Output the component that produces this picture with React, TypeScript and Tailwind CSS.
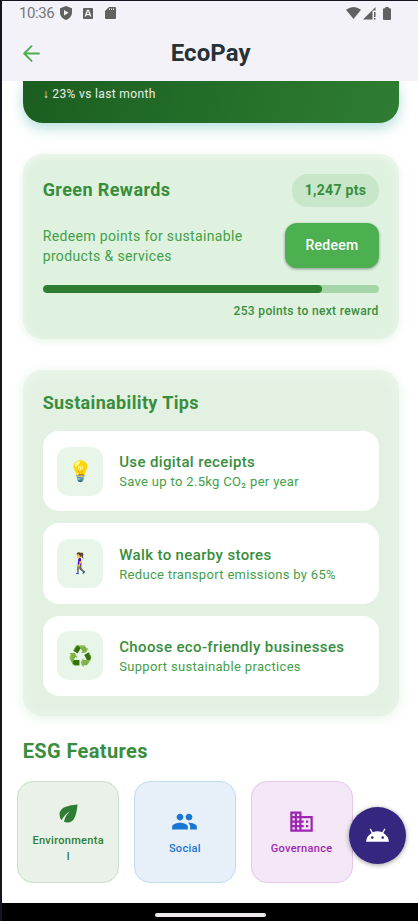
import React from "react";
import { MdAndroid, MdBusiness, MdEco, MdPeople } from "react-icons/md";

function StatusBar() {
  return (
    <div className="flex h-6 items-center justify-between pl-[17px] pr-[27px] text-[#616161]">
      <div className="flex items-center">
        <span className="w-[41px] text-[15px] leading-6 tracking-[-0.400px] text-[#757575]">10:36</span>
        <svg className="h-[14px] w-3" viewBox="0 0 12 14" fill="currentColor">
          <path fillRule="evenodd" d="M6 0 12 2.2V6.6C12 10 9.500 13 6 14 2.500 13 0 10 0 6.600V2.200ZM4 4V9.500L8.600 6.750Z" />
        </svg>
        <svg className="ml-[11px] h-[11px] w-[10px]" viewBox="0 0 10 11" fill="none">
          <rect width="10" height="11" rx="1" fill="currentColor" />
          <path d="M2.300 8.500 4.400 2.500H5.600L7.700 8.500M3.200 6.500H6.800" stroke="#f3f2f8" strokeWidth="1.300" />
        </svg>
        <svg className="ml-3 h-3 w-[11px]" viewBox="0 0 11 12" fill="currentColor">
          <path fillRule="evenodd" d="M4 0H10Q11 0 11 1V11Q11 12 10 12H1Q0 12 0 11V4ZM4 1.500V3H5V1.500ZM6 1.500V3H7V1.500ZM8 1.500V3H9V1.500Z" />
        </svg>
      </div>
      <div className="flex items-center">
        <svg className="h-3 w-[15px]" viewBox="0 0 15 12" fill="currentColor">
          <path d="M0 2.700Q7.500-2.700 15 2.700L7.500 12Z" />
        </svg>
        <svg className="ml-[1.500px] h-[13px] w-[13px]" viewBox="0 0 13 13" fill="currentColor">
          <path d="M0 12.500 12.500 0V3.500H9.500V12.500Z" />
          <path d="M11 5H12.500V10H11ZM11 11H12.500V12.500H11Z" />
        </svg>
        <svg className="ml-[7px] mr-[0.500px] h-[13px] w-2" viewBox="0 0 8 13" fill="currentColor">
          <path d="M2.300 0H5.700V1.300H7Q8 1.300 8 2.300V12Q8 13 7 13H1Q0 13 0 12V2.300Q0 1.300 1 1.300H2.300Z" />
        </svg>
      </div>
    </div>
  );
}

function Header() {
  return (
    <div className="grid h-14 grid-cols-[1fr_auto_1fr] items-center pl-[20.500px] pr-[19px]">
      <svg className="h-[17px] w-[17px]" viewBox="0 0 17 17" fill="none" stroke="#4caf50" strokeWidth="1.900" strokeLinecap="round" strokeLinejoin="round">
        <path d="M16 8.500H1.500M8.500 1.200 1.200 8.500 8.500 15.800" />
      </svg>
      <h1 className="text-[24px] font-bold leading-8 tracking-[0.100px] text-[#263238]">EcoPay</h1>
    </div>
  );
}

function Rewards() {
  return (
    <section className="mt-[31px] h-[185px] rounded-[20px] bg-[#dff1df] px-5 pt-5 shadow-[0_2px_10px_rgba(76,175,80,0.13),inset_0_3px_12px_rgba(255,255,255,0.5)]">
      <div className="flex items-center justify-between">
        <h2 className="pb-[2px] text-[18px] font-bold tracking-[0.400px] text-[#388e3c]">Green Rewards</h2>
        <span className="flex h-[33px] w-[86.500px] items-center justify-center rounded-2xl bg-[#c8e6c9] text-[14px] font-bold tracking-[0.300px] text-[#388e3c]">1,247 pts</span>
      </div>
      <div className="mt-4 flex items-center justify-between">
        <p className="w-[220px] pt-px text-[14px] leading-5 tracking-[0.350px] text-[#43a047]">Redeem points for sustainable products &amp; services</p>
        <button className="h-[45px] w-[93.500px] rounded-xl bg-[#4caf50] text-[14px] font-medium tracking-[0.250px] text-white shadow-[0_1px_3px_rgba(0,0,0,0.4)]">
          Redeem
        </button>
      </div>
      <div className="mt-[17px] h-2 overflow-hidden rounded-full bg-[#a5d6a7]">
        <div className="h-full w-[83.200%] rounded-full bg-[#2e7d32]" />
      </div>
      <p className="mt-2 text-right text-[12px] font-medium leading-5 tracking-[0.350px] text-[#388e3c]">253 points to next reward</p>
    </section>
  );
}

const tips = [
  { icon: "💡", title: "Use digital receipts", text: "Save up to 2.5kg CO₂ per year" },
  { icon: "🚶‍♀️", title: "Walk to nearby stores", text: "Reduce transport emissions by 65%" },
  { icon: "♻️", title: "Choose eco-friendly businesses", text: "Support sustainable practices" },
];

function Tips() {
  return (
    <section className="mt-[31px] h-[346px] rounded-[20px] bg-[#e3f1e3] px-5 pt-5 shadow-[0_2px_12px_rgba(76,175,80,0.15),inset_0_3px_14px_rgba(255,255,255,0.4)]">
      <h2 className="text-[18px] font-bold leading-[26px] tracking-[0.350px] text-[#388e3c]">Sustainability Tips</h2>
      <div className="mt-[15px] flex flex-col gap-3">
        {tips.map((tip) => (
          <div key={tip.title} className="flex h-[80.300px] items-center rounded-2xl bg-white px-[14.700px]">
            <div className="flex h-[49px] w-[46px] items-center justify-center rounded-xl bg-[#e8f5e9] text-[20px]">{tip.icon}</div>
            <div className="ml-[15.800px] whitespace-nowrap pt-[2.500px]">
              <h3 className="text-[15px] font-medium leading-5 tracking-[0.370px] text-[#388e3c]">{tip.title}</h3>
              <p className="text-[13px] leading-5 tracking-[0.330px] text-[#43a047]">{tip.text}</p>
            </div>
          </div>
        ))}
      </div>
    </section>
  );
}

function Features() {
  return (
    <section>
      <h2 className="mt-[21px] text-[20px] font-bold leading-7 tracking-[0.380px] text-[#388e3c]">ESG Features</h2>
      <div className="-ml-[5.500px] mt-4 flex gap-[14.700px]">
        <div className="flex h-[102px] w-[102px] flex-col items-center justify-center rounded-2xl border border-[#c8dfc9] bg-[#eaf1e9] text-[#2e7d32]">
          <MdEco size={27} />
          <span className="mt-1.5 w-[74px] break-all text-center text-[11px] font-medium leading-4 tracking-[0.300px]">Environmental</span>
        </div>
        <div className="flex h-[102px] w-[102px] flex-col items-center justify-center rounded-2xl border border-[#bedaf4] bg-[#e7f0f9] text-[#1976d2]">
          <MdPeople size={27} />
          <span className="mt-1.5 text-[11px] font-medium leading-4 tracking-[0.300px]">Social</span>
        </div>
        <div className="flex h-[102px] w-[102px] flex-col items-center justify-center rounded-2xl border border-[#e4c8ec] bg-[#f4e8f6] text-[#9c27b0]">
          <MdBusiness size={27} />
          <span className="mt-1.5 text-[11px] font-medium leading-4 tracking-[0.300px]">Governance</span>
        </div>
      </div>
    </section>
  );
}

export default function App() {
  return (
    <div className="relative flex h-[921px] w-[418px] flex-col overflow-hidden border-l-2 border-t border-[#15151f] bg-white font-['Roboto','Noto_Sans',sans-serif]">
      <div className="h-20 shrink-0 bg-[#f3f2f8]">
        <StatusBar />
        <Header />
      </div>
      <main className="h-[822px] shrink-0 overflow-hidden pl-[20.700px] pr-[19.300px]">
        <div className="h-[42px] rounded-b-[20px] bg-[linear-gradient(105deg,#1b5e20,#2e7d32)] px-5 pt-[3px] text-[12px] leading-5 tracking-[0.350px] text-white/90 shadow-[0_5px_14px_rgba(0,150,136,0.3)]">
          ↓ 23% vs last month
        </div>
        <Rewards />
        <Tips />
        <Features />
      </main>
      <div className="flex h-[18px] shrink-0 justify-center bg-black pt-[10px]">
        <div className="h-1 w-[111px] rounded-full bg-[#eee9ec]" />
      </div>
      <button className="absolute left-[347px] top-[805.500px] flex h-[57px] w-[57px] items-center justify-center rounded-full bg-[#35277f] text-white shadow-[0_1px_5px_rgba(0,0,0,0.4)]">
        <MdAndroid size={25} />
      </button>
      <div className="absolute -left-[2px] top-[350px] h-2 w-[2px] border-y border-r border-[#aeb4cc]" />
      <div className="absolute -left-[2px] top-[634px] h-2 w-[2px] border-y border-r border-[#aeb4cc]" />
    </div>
  );
}
